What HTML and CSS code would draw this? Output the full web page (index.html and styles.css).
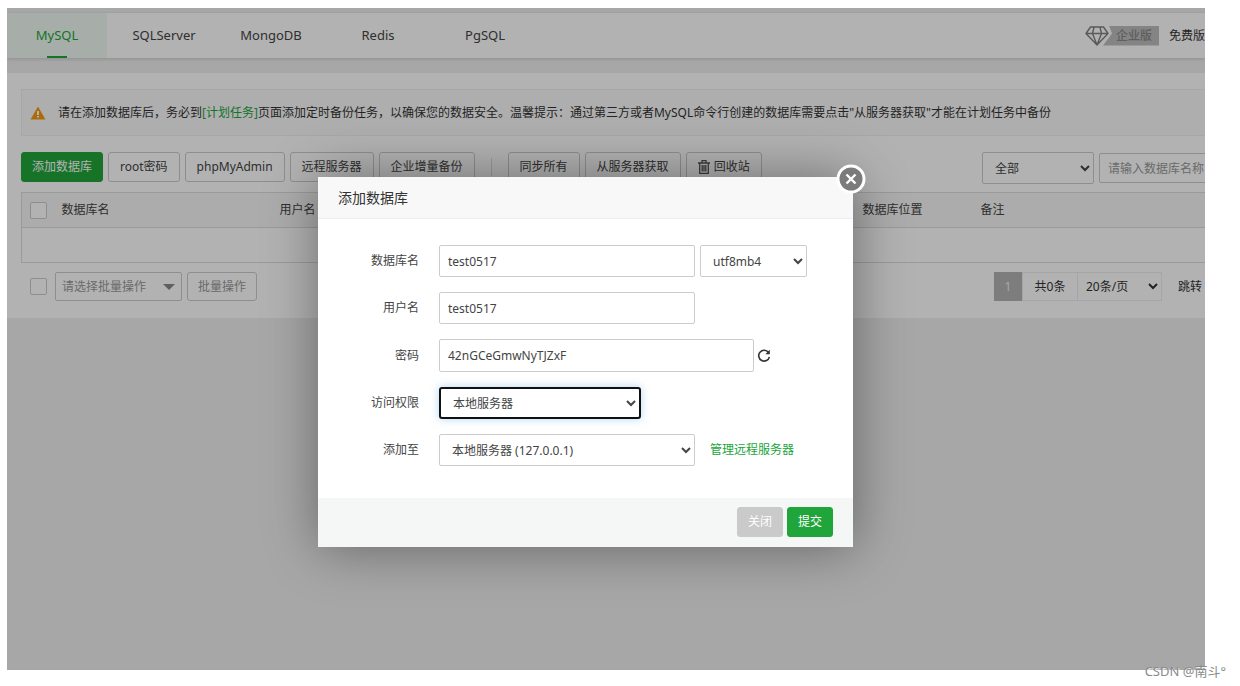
FILE: index.html
```html
<!DOCTYPE html>
<html lang="zh-CN">
<head>
<meta charset="utf-8">
<title>数据库</title>
<link rel="stylesheet" href="styles.css">
</head>
<body>
<div class="app">
  <nav class="nav">
    <div class="tabs">
      <a class="tab tab-active" href="#mysql">MySQL</a>
      <a class="tab" href="#sqlserver">SQLServer</a>
      <a class="tab" href="#mongodb">MongoDB</a>
      <a class="tab" href="#redis">Redis</a>
      <a class="tab" href="#pgsql">PgSQL</a>
    </div>
    <div class="edition">
      <svg class="diamond" viewBox="0 0 24 20" width="24" height="20" fill="none" stroke="#818181" stroke-width="1.4" stroke-linejoin="round"><path d="M5.500 1H18.500L23 7.500L12 19L1 7.500ZM1 7.500H23M9 1L7.500 7.500L12 19L16.500 7.500L15 1"/></svg>
      <span class="ribbon">企业版</span>
      <span class="free">免费版</span>
    </div>
  </nav>

  <main class="panel">
    <div class="notice">
      <svg class="warn" viewBox="0 0 16 14" width="16" height="14"><path d="M8 .5L15.500 13.500H.5Z" fill="#f79a0f"/><path d="M7 5h2v4H7zM7 10h2v1.600H7z" fill="#fff"/></svg>
      <p class="notice-text">请在添加数据库后，务必到<a class="link" href="#cron">[计划任务]</a>页面添加定时备份任务，以确保您的数据安全。温馨提示：通过第三方或者MySQL命令行创建的数据库需要点击"从服务器获取"才能在计划任务中备份</p>
    </div>

    <div class="toolbar">
      <button class="btn btn-primary">添加数据库</button>
      <button class="btn">root密码</button>
      <button class="btn">phpMyAdmin</button>
      <button class="btn">远程服务器</button>
      <button class="btn">企业增量备份</button>
      <span class="divider"></span>
      <button class="btn">同步所有</button>
      <button class="btn">从服务器获取</button>
      <button class="btn btn-icon"><svg viewBox="0 0 12 14" width="12" height="14" fill="none" stroke="#555" stroke-width="1.300"><path d="M0 3H12M4 2.500V.7H8V2.500M1.700 3V13.300H10.300V3M4.200 5V11.500M6 5V11.500M7.800 5V11.500"/></svg>回收站</button>
      <div class="search">
        <select class="field filter" aria-label="分类"><option>全部</option></select>
        <input class="field keyword" type="text" placeholder="请输入数据库名称" aria-label="搜索">
      </div>
    </div>

    <table class="grid">
      <colgroup><col class="c-check"><col class="c-name"><col class="c-user"><col class="c-place"><col></colgroup>
      <thead><tr><th><input class="check" type="checkbox" aria-label="全选"></th><th>数据库名</th><th>用户名</th><th>数据库位置</th><th>备注</th></tr></thead>
      <tbody><tr><td colspan="5"></td></tr></tbody>
    </table>

    <div class="footer">
      <input class="check" type="checkbox" aria-label="选择全部">
      <button class="batch">请选择批量操作<span class="caret"></span></button>
      <button class="btn btn-muted">批量操作</button>
      <div class="pager">
        <span class="page-current">1</span>
        <span class="page-total">共0条</span>
        <select class="page-size" aria-label="每页条数"><option>20条/页</option></select>
        <span class="jump">跳转</span>
      </div>
    </div>
  </main>

  <div class="mask"></div>

  <form class="dialog" role="dialog" aria-labelledby="dialog-title">
    <h2 class="dialog-title" id="dialog-title">添加数据库</h2>
    <button class="close" type="button" aria-label="关闭窗口"><svg viewBox="0 0 30 30" width="30" height="30"><circle cx="15" cy="15" r="13" fill="#7b7b7b" stroke="#fff" stroke-width="3"/><path d="M10.500 10.500L19.500 19.500M19.500 10.500L10.500 19.500" stroke="#fff" stroke-width="2.400"/></svg></button>
    <div class="form">
      <div class="row">
        <label class="label" for="db">数据库名</label>
        <input class="field w-mid" id="db" type="text" value="test0517">
        <select class="field w-code" aria-label="编码"><option>utf8mb4</option></select>
      </div>
      <div class="row">
        <label class="label" for="user">用户名</label>
        <input class="field w-mid" id="user" type="text" value="test0517">
      </div>
      <div class="row">
        <label class="label" for="pwd">密码</label>
        <input class="field w-long" id="pwd" type="text" value="42nGCeGmwNyTJZxF">
        <button class="refresh" type="button" aria-label="随机密码"><svg viewBox="0 0 14 14" width="14" height="14" fill="none" stroke="#333" stroke-width="1.600"><path d="M11.500 3.500A5.400 5.400 0 1 0 12.400 7.800"/><path d="M12.800 .8V5.200H8.300Z" fill="#333" stroke="none"/></svg></button>
      </div>
      <div class="row">
        <label class="label" for="access">访问权限</label>
        <select class="field w-short field-focus" id="access"><option>本地服务器</option></select>
      </div>
      <div class="row">
        <label class="label" for="host">添加至</label>
        <select class="field w-mid" id="host"><option>本地服务器 (127.0.0.1)</option></select>
        <a class="link manage" href="#servers">管理远程服务器</a>
      </div>
    </div>
    <div class="actions">
      <button class="btn btn-cancel" type="button">关闭</button>
      <button class="btn btn-primary" type="button">提交</button>
    </div>
  </form>
</div>
<div class="watermark">CSDN @南斗°</div>
</body>
</html>
```

FILE: styles.css
```css
* { box-sizing: border-box; }

body {
  margin: 0;
  background: #fff;
  color: #444;
  font: 12px/18px "Noto Sans", "Noto Sans CJK SC", sans-serif;
}

button, input, select { font: inherit; color: inherit; margin: 0; }
a { text-decoration: none; color: inherit; }
.link { color: #20a53a; }

.app {
  position: relative;
  height: calc(100vh - 24px);
  margin: 8px 35px 16px 7px;
  padding-top: 5px;
  overflow: hidden;
  background: #f0f0f0;
}

/* Top navigation */
.nav {
  display: flex;
  justify-content: space-between;
  height: 45px;
  background: #fff;
  box-shadow: 0 1px 4px rgba(0, 0, 0, .16);
}
.tabs { display: flex; gap: 7px; }
.tab {
  position: relative;
  width: 100px;
  font-size: 13px;
  line-height: 45px;
  text-align: center;
}
.tab-active { background: #f0f9f2; color: #20a53a; }
.tab-active::after {
  content: "";
  position: absolute;
  left: 40px;
  bottom: 0;
  width: 20px;
  height: 2px;
  background: #20a53a;
}
.edition { display: flex; align-items: center; white-space: nowrap; }
.ribbon {
  width: 56px;
  height: 20px;
  margin-left: -6px;
  padding-left: 13px;
  background: #bdbdbd;
  color: #888;
  font-weight: 500;
  line-height: 20px;
  clip-path: polygon(6px 0, 100% 0, 100% 100%, 0 100%, 9px 8px);
}
.free { margin-left: 10px; color: #333; }

/* Main panel */
.panel {
  margin-top: 15px;
  padding: 16px 0 17px 14px;
  background: #fff;
}
.notice {
  display: flex;
  align-items: center;
  gap: 12px;
  height: 47px;
  padding-left: 8px;
  border: 1px solid #f0f0f0;
  border-right: 0;
  background: #fafafa;
}
.notice-text { margin: 0; white-space: nowrap; color: #333; }

.toolbar {
  display: flex;
  gap: 5px;
  margin: 16px -40px 10px 0;
  height: 30px;
}
.btn {
  height: 30px;
  padding: 0 11px;
  border: 1px solid #ccc;
  border-radius: 3px;
  background: #fff;
  white-space: nowrap;
}
.btn-primary { padding: 0 10px; border-color: #20a53a; background: #20a53a; color: #fff; }
.btn-icon { display: flex; align-items: center; gap: 4px; }
.divider { width: 1px; height: 18px; margin: 6px 11px 0 11px; background: #ddd; }
.search { display: flex; gap: 5px; margin-left: auto; }
.filter { width: 112px; }
.keyword { width: 146px; height: 30px; margin-top: 1px; }
.keyword::placeholder { color: #999; }

.field {
  height: 32px;
  padding: 0 8px;
  border: 1px solid #ccc;
  border-radius: 2px;
  background: #fff;
}
.toolbar .keyword { height: 30px; }
.field-focus {
  border: 2px solid #111;
  border-radius: 3px;
  box-shadow: 0 0 8px rgba(102, 175, 233, .5);
}

.grid {
  width: 100%;
  table-layout: fixed;
  border-collapse: collapse;
  border: 1px solid #ddd;
  border-right: 0;
}
.c-check { width: 32px; }
.c-name { width: 218px; }
.c-user { width: 583px; }
.c-place { width: 118px; }
.grid th {
  height: 35px;
  padding: 0 8px;
  background: #f6f6f6;
  border-bottom: 1px solid #ddd;
  font-weight: 400;
  text-align: left;
}
.grid td { height: 35px; padding: 0; }
.check {
  display: block;
  flex: none;
  width: 17px;
  height: 17px;
  appearance: none;
  border: 1px solid #ccc;
  border-radius: 2px;
  background: #fff;
}

.footer { display: flex; align-items: center; gap: 5px; margin-top: 9px; padding-left: 9px; }
.footer .check { margin-right: 3px; }
.batch {
  display: flex;
  align-items: center;
  justify-content: space-between;
  width: 127px;
  height: 29px;
  padding: 0 6px;
  border: 1px solid #ccc;
  border-radius: 2px;
  background: #fff;
  color: #999;
}
.caret { border: 6px solid transparent; border-top-color: #888; border-bottom: 0; }
.btn-muted { height: 29px; padding: 0 10px; color: #999; }
.pager { display: flex; margin-left: auto; line-height: 29px; white-space: nowrap; color: #333; }
.page-current { width: 28px; background: #b4b4b4; color: #eee; text-align: center; }
.page-total { width: 56px; border: 1px solid #ececec; line-height: 27px; text-align: center; }
.page-size {
  width: 84px;
  height: 29px;
  padding: 0 4px;
  border: 1px solid #ececec;
  border-left: 0;
  border-radius: 0;
  background: #fff;
}
.jump { margin: 0 3px 0 16px; }

.mask { position: absolute; inset: 0; background: rgba(0, 0, 0, .3); }

/* Add-database dialog */
.dialog {
  position: absolute;
  top: 169px;
  left: 311px;
  width: 535px;
  background: #fff;
  box-shadow: 1px 1px 50px rgba(0, 0, 0, .4);
}
.dialog-title {
  margin: 0;
  padding-left: 20px;
  border-bottom: 1px solid #eee;
  background: #f8f8f8;
  color: #333;
  font-size: 14px;
  font-weight: 400;
  line-height: 41px;
}
.close {
  position: absolute;
  top: -13px;
  right: -13px;
  width: 30px;
  height: 30px;
  padding: 0;
  border: 0;
  background: none;
}
.close svg { display: block; }
.form { display: grid; gap: 15px; padding: 26px 0 32px; }
.row { display: flex; align-items: center; gap: 5px; }
.label { width: 101px; margin-right: 15px; text-align: right; }
.w-mid { width: 256px; }
.w-code { width: 107px; }
.w-long { width: 315px; height: 33px; }
.w-short { width: 202px; }
.refresh { display: flex; margin-left: -2px; padding: 0; border: 0; background: none; }
.manage { margin-left: 10px; }
.actions {
  display: flex;
  justify-content: flex-end;
  gap: 4px;
  padding: 9px 20px 10px;
  background: #f5f7f7;
}
.btn-cancel { padding: 0 10px; border-color: #cacaca; background: #cacaca; color: #fff; }

.watermark {
  position: absolute;
  right: 14px;
  bottom: 6px;
  color: #8a8a8a;
  font-size: 13px;
  text-shadow: 1px 1px 1px #fff;
}
```
